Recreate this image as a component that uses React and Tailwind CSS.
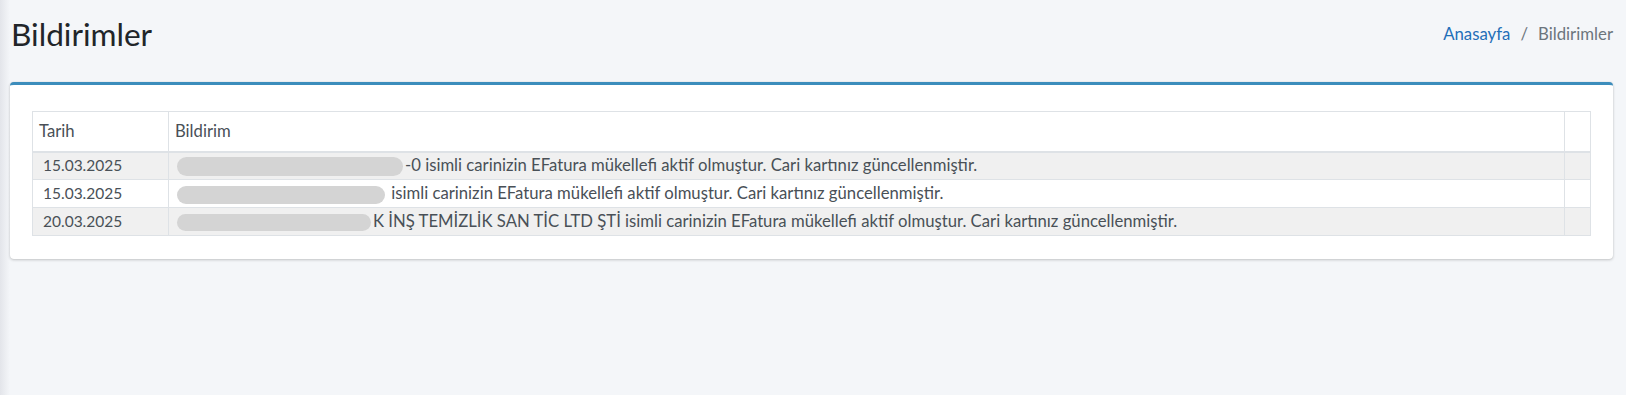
import React from 'react';

const rows = [
  {
    date: '15.03.2025',
    blobs: [{ w: 'w-[226px]', h: 'h-[19px]' }],
    text: '-0 isimli carinizin EFatura mükellefi aktif olmuştur. Cari kartınız güncellenmiştir.'
  },
  {
    date: '15.03.2025',
    blobs: [{ w: 'w-[208px]', h: 'h-[18px]' }],
    text: ' isimli carinizin EFatura mükellefi aktif olmuştur. Cari kartınız güncellenmiştir.'
  },
  {
    date: '20.03.2025',
    blobs: [{ w: 'w-[194px]', h: 'h-[17px]' }],
    text: 'K İNŞ TEMİZLİK SAN TİC LTD ŞTİ isimli carinizin EFatura mükellefi aktif olmuştur. Cari kartınız güncellenmiştir.'
  }
];

const App = () => {
  return (
    <div
      className="flex min-h-[395px] bg-[#f4f6f9] text-[#212529]"
      style={{ fontFamily: 'Lato, "Noto Sans", sans-serif' }}
    >
      {/* sidebar shadow */}
      <div className="w-[10px] shrink-0 bg-gradient-to-r from-[#e3e5ea] to-[#f4f6f9]" />

      <div className="flex-1 pr-[13px]">
        <div className="flex items-center justify-between pt-[14px] pb-[28px]">
          <h1 className="pl-px text-[31.6px] leading-[40px] font-normal text-[#212529]">
            Bildirimler
          </h1>
          <div className="flex items-center text-[16.8px] text-[#6c757d]">
            <a className="text-[#1f6fb8]">Anasayfa</a>
            <span className="px-[10px]">/</span>
            <span>Bildirimler</span>
          </div>
        </div>

        <div className="rounded-[4px] border-t-[3px] border-[#3c8dbc] bg-white px-[22px] pt-[26px] pb-[23px] shadow-[0_0_1px_rgba(0,0,0,0.13),0_1px_3px_rgba(0,0,0,0.2)]">
          <table className="w-full border-collapse text-[16.7px] text-[#495057]">
            <thead>
              <tr className="h-[40px] border-b-2 border-[#dee2e6]">
                <th className="w-[136px] border border-[#dee2e6] pl-[6px] text-left font-normal">
                  Tarih
                </th>
                <th className="border border-[#dee2e6] pl-[6px] text-left font-normal">
                  Bildirim
                </th>
                <th className="w-[26px] border border-[#dee2e6]" />
              </tr>
            </thead>
            <tbody>
              {rows.map((row, i) => (
                <tr
                  key={i}
                  className={`h-[28px] ${i % 2 === 0 ? 'bg-[#f0f0f0]' : 'bg-white'}`}
                >
                  <td className="border border-[#dee2e6] pl-[10px] text-[15.5px]">{row.date}</td>
                  <td className="border border-[#dee2e6] pl-[8px] whitespace-nowrap">
                    {row.blobs.map((b, j) => (
                      <span
                        key={j}
                        className={`mr-[2px] inline-block rounded-full bg-[#d4d4d4] align-middle ${b.w} ${b.h}`}
                      />
                    ))}
                    {row.text}
                  </td>
                  <td className="border border-[#dee2e6]" />
                </tr>
              ))}
            </tbody>
          </table>
        </div>
      </div>
    </div>
  );
};

export default App;
